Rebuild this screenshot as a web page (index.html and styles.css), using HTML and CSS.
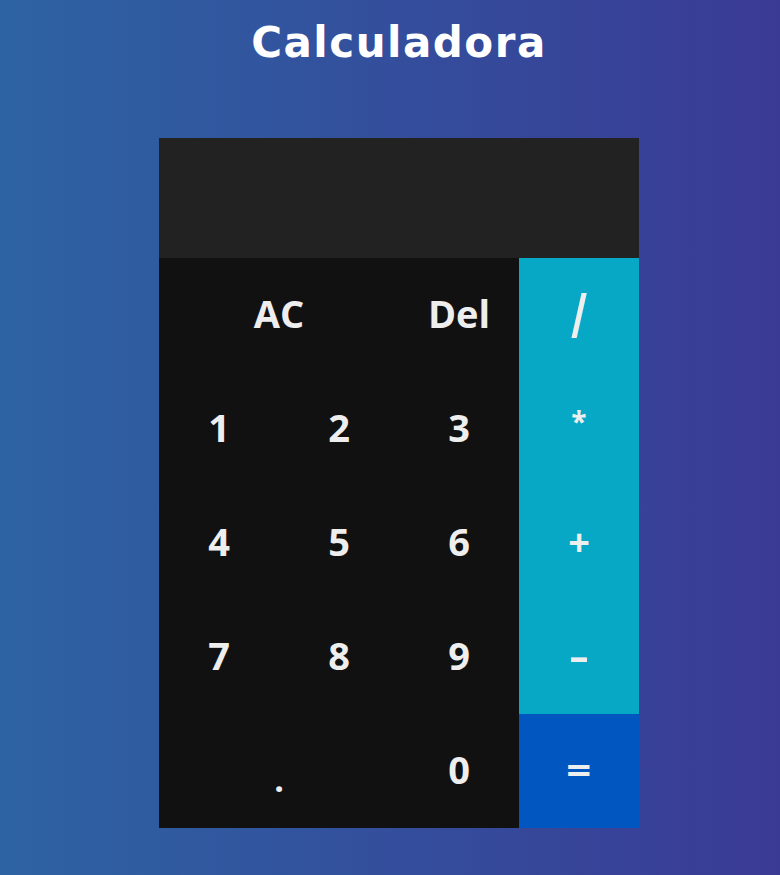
FILE: index.html
```html
<!DOCTYPE html>
<html lang="es">
<head>
<meta charset="utf-8">
<title>Calculadora</title>
<link rel="stylesheet" href="styles.css">
</head>
<body>
<h1 class="title">Calculadora</h1>
<div class="calc">
  <div class="display"></div>
  <button class="key span2">AC</button>
  <button class="key">Del</button>
  <button class="key op"><span class="slash">/</span></button>
  <button class="key">1</button>
  <button class="key">2</button>
  <button class="key">3</button>
  <button class="key op"><span class="star">*</span></button>
  <button class="key">4</button>
  <button class="key">5</button>
  <button class="key">6</button>
  <button class="key op">+</button>
  <button class="key">7</button>
  <button class="key">8</button>
  <button class="key">9</button>
  <button class="key op"><span class="minus">-</span></button>
  <button class="key span2"><span class="dot">.</span></button>
  <button class="key">0</button>
  <button class="key eq"><span class="equal">=</span></button>
</div>
</body>
</html>
```
FILE: styles.css
```css
* { box-sizing: border-box; }
html, body { height: 100%; }
body {
  margin: 0;
  padding-left: 18px;
  background: linear-gradient(to right, #2d63a3, #3a3a95);
  font-family: "Open Sans", "DejaVu Sans", sans-serif;
  display: flex;
  flex-direction: column;
  align-items: center;
}
.title {
  margin: 13px 0 0;
  color: #fff;
  font-family: "DejaVu Sans", sans-serif;
  font-size: 42px;
  font-weight: 700;
  line-height: 60px;
  letter-spacing: 1.5px;
}
.calc {
  margin-top: 65px;
  display: grid;
  grid-template-columns: repeat(4, 120px);
  grid-template-rows: 120px repeat(5, 114px);
}
.display {
  grid-column: 1 / -1;
  background: #222222;
}
.key {
  border: 0;
  padding: 0;
  margin: 0;
  background: #111111;
  color: #eeeeee;
  font-family: inherit;
  font-size: 38px;
  font-weight: 700;
  line-height: 1;
  display: flex;
  align-items: center;
  justify-content: center;
  padding-bottom: 4px;
}
.span2 { grid-column: span 2; }
.op { background: #07a8c5; }
.eq { background: #0156c0; }
.slash {
  display: inline-block;
  font-weight: 700;
  transform: scaleY(1.65);
}
.star {
  display: inline-block;
  font-size: 28px;
  transform: translateY(-6px);
}
.minus {
  display: inline-block;
  transform: scaleX(1.6);
}
.dot {
  display: inline-block;
  font-size: 34px;
  transform: translateY(10px);
}
.equal {
  display: inline-block;
  transform: scaleX(1.15);
}
```
